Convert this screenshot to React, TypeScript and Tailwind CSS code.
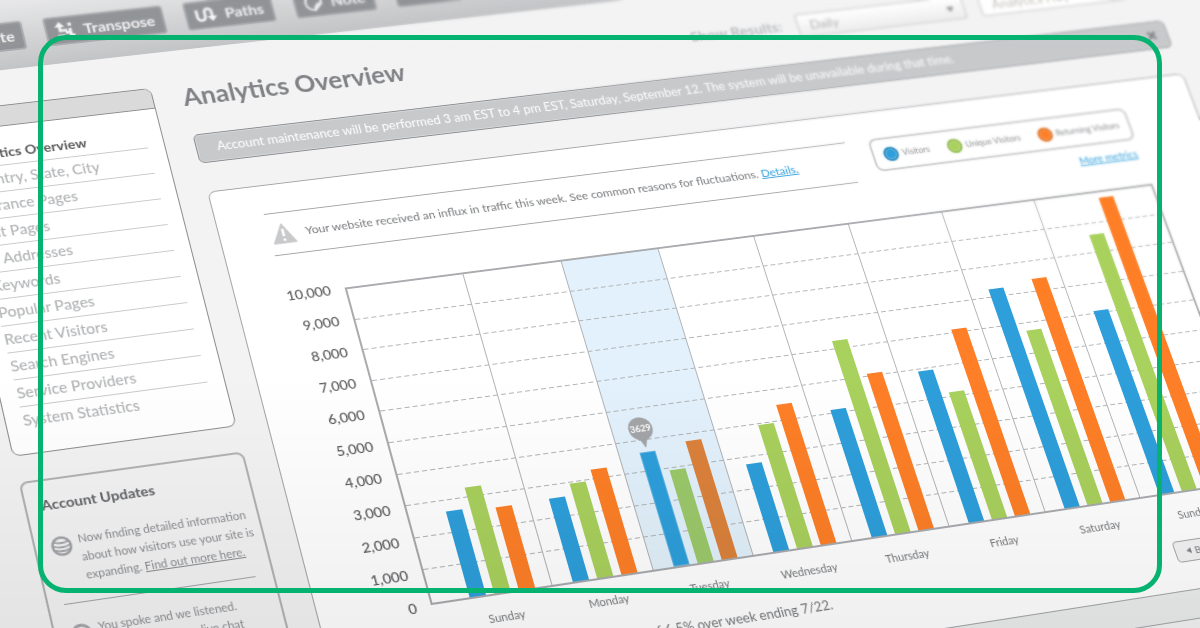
import React from 'react';

type Day = {
  label: string;
  values: [number, number, number];
};

const MAX_VALUE = 10000;

const toolbarItems = ['Create', 'Transpose', 'Paths', 'Note', 'Export'];

const navItems = [
  'Analytics Overview',
  'Country, State, City',
  'Entrance Pages',
  'Exit Pages',
  'IP Addresses',
  'Keywords',
  'Popular Pages',
  'Recent Visitors',
  'Search Engines',
  'Service Providers',
  'System Statistics',
];

const axisLabels = [
  '10,000', '9,000', '8,000', '7,000', '6,000', '5,000',
  '4,000', '3,000', '2,000', '1,000', '0',
];

const days: Day[] = [
  { label: 'Sunday', values: [2673, 3313, 2580] },
  { label: 'Monday', values: [2603, 2973, 3306] },
  { label: 'Tuesday', values: [3629, 2934, 3768] },
  { label: 'Wednesday', values: [2780, 3956, 4497] },
  { label: 'Thursday', values: [4125, 6304, 5092] },
  { label: 'Friday', values: [4954, 4147, 6137] },
  { label: 'Saturday', values: [7264, 5777, 7425] },
  { label: 'Sunday', values: [6092, 8618, 9805] },
];

const SELECTED_DAY = 2;

const barColors = ['bg-[#2e9fdb]', 'bg-[#a9d15d]', 'bg-[#fe7f27]'];
const selectedBarColors = [
  'bg-[#2e9fdb] ring-1 ring-inset ring-[#5fb5e4]',
  'bg-[#9cc96b]',
  'bg-[#dc823c]',
];

const legend = [
  { label: 'Visitors', color: 'bg-[#2e9fdb] border-[#2687bd]' },
  { label: 'Unique Visitors', color: 'bg-[#a9d15d] border-[#8cb84a]' },
  { label: 'Returning Visitors', color: 'bg-[#fe7f27] border-[#dd6c1c]' },
];

const TransposeIcon = () => (
  <svg viewBox="0 0 20 20" className="h-5 w-5" fill="none" stroke="currentColor" strokeWidth="3">
    <path d="M5 4v6h7M15 8v8M10 12.500h6M2 16h7M14 16h5" />
    <path d="M5 0 10 6H0zM13.500 2h3.500v3.500h-3.500z" fill="currentColor" stroke="none" />
  </svg>
);

const PathsIcon = () => (
  <svg viewBox="0 0 22 20" className="h-5 w-[22px]" fill="none" stroke="currentColor" strokeWidth="3">
    <path d="M2 4v8a4 4 0 0 0 8 0V7a3.500 3.500 0 0 1 7 0v7" />
    <path d="M12 12h10l-5 6z" fill="currentColor" stroke="none" />
  </svg>
);

const NoteIcon = () => (
  <svg viewBox="0 0 20 20" className="h-5 w-5" fill="none" stroke="currentColor" strokeWidth="2">
    <path d="M11 18a8 8 0 1 1 7-7l-7 7c0-4 2-7 7-7" />
  </svg>
);

const GlobeIcon = () => (
  <svg viewBox="0 0 20 20" className="mt-1 h-5 w-5 shrink-0 text-[#a3a5a8]" fill="none" stroke="currentColor">
    <circle cx="10" cy="10" r="8.500" strokeWidth="2.500" />
    <path d="M3 5.500q7 3 14 0M2 9.500q8 3.500 16 0M3 13.500q7 3 14 0" strokeWidth="1.800" />
  </svg>
);

const ChatIcon = () => (
  <svg viewBox="0 0 20 20" className="mt-1 h-5 w-5 shrink-0 text-[#a3a5a8]" fill="none" stroke="currentColor">
    <circle cx="10" cy="10" r="8.500" strokeWidth="3" />
  </svg>
);

const WarningIcon = () => (
  <svg viewBox="0 0 24 22" className="h-[22px] w-6 shrink-0">
    <path d="M12 1 23 21H1z" fill="#c8c9cb" stroke="#c8c9cb" strokeWidth="1.500" strokeLinejoin="round" />
    <path d="M12 6v8M12 16.500v2.500" stroke="#fff" strokeWidth="2.500" />
  </svg>
);

const toolbarIcons: Record<string, React.ReactNode> = {
  Transpose: <TransposeIcon />,
  Paths: <PathsIcon />,
  Note: <NoteIcon />,
};

const Toolbar = () => (
  <header className="flex h-[84px] items-end gap-[21px] bg-linear-to-b from-[#ececed] to-[#c3c4c6] pb-5 pl-[88px]">
    {toolbarItems.map((item) => (
      <button
        key={item}
        type="button"
        className="flex h-8 items-center gap-2 rounded-sm border-2 border-[#a9abae] bg-[#929497] px-2 text-base font-bold text-white/90"
      >
        {toolbarIcons[item]}
        {item}
      </button>
    ))}
  </header>
);

const Sidebar = () => (
  <aside className="w-[214px] shrink-0">
    <nav className="overflow-hidden rounded-lg border border-[#8b8d90] bg-white pb-5">
      <div className="h-[22px] border-b border-[#8b8d90] bg-[#dadadb]" />
      <ul className="pt-3.5 pr-4 pl-4">
        {navItems.map((item, i) => (
          <li key={item} className={i < navItems.length - 1 ? 'border-b border-[#c8c9cb]' : ''}>
            <a
              href="#"
              className={`block leading-[27px] whitespace-nowrap ${i === 0 ? 'text-sm font-bold text-[#58595b]' : 'text-[15px] font-medium text-[#b1b3b5]'}`}
            >
              {item}
            </a>
          </li>
        ))}
      </ul>
    </nav>

    <section className="mt-[26px] rounded-lg border-2 border-[#b1b3b5] pt-3 pr-4 pb-6 pl-3.5">
      <h2 className="text-sm leading-6 font-bold text-[#636467]">Account Updates</h2>
      <div className="mt-4 flex gap-1.5 border-b border-[#a3a5a8] pb-4 text-[11px] leading-[18px] text-[#8b8d90]">
        <GlobeIcon />
        <p className="whitespace-nowrap">
          Now finding detailed information
          <br />
          about how visitors use your site is
          <br />
          expanding. <a href="#" className="underline">Find out more here.</a>
        </p>
      </div>
      <div className="mt-4 flex gap-1.5 text-[11px] leading-[18px] text-[#8b8d90]">
        <ChatIcon />
        <p className="whitespace-nowrap">
          You spoke and we listened.
          <br />
          Now our users can live chat
        </p>
      </div>
    </section>
  </aside>
);

const Chart = () => (
  <div className="flex">
    <div className="-mt-4 w-[59px] shrink-0 pr-3.5 text-right text-sm font-medium text-[#58595b]">
      {axisLabels.map((label) => (
        <div key={label} className="h-[33px] leading-[33px]">{label}</div>
      ))}
    </div>
    <div className="min-w-0 flex-1">
      <div className="relative flex h-[330px] border-2 border-[#a9abae]">
        <div className="absolute top-0 bottom-0 left-[216px] w-[100px] bg-[#e2f1fb]" />
        <div className="absolute inset-0 flex flex-col">
          {axisLabels.slice(1).map((label) => (
            <div key={label} className="flex flex-1 items-end last:invisible">
              <div className="h-px w-full bg-[repeating-linear-gradient(90deg,#b1b3b5_0_5px,transparent_5px_8px)]" />
            </div>
          ))}
        </div>
        {days.map((day, i) => (
          <div
            key={i}
            className={`relative flex items-end gap-2 ${i === 0 ? 'w-[117px] pl-9' : i === days.length - 1 ? 'flex-1 pl-5' : 'w-[100px] pl-5'} ${i < days.length - 1 ? 'border-r border-[#b1b3b5]' : ''}`}
          >
            {day.values.map((value, s) => (
              <div
                key={s}
                className={`relative w-4 ${i === SELECTED_DAY ? selectedBarColors[s] : barColors[s]}`}
                style={{ height: `${(value / MAX_VALUE) * 100}%` }}
              >
                {i === SELECTED_DAY && s === 0 && (
                  <span className="absolute -top-9 -left-1 flex h-6 w-6 items-center justify-center rounded-full bg-[#a3a5a8] text-[9px] font-bold text-white">
                    {value}
                    <span className="absolute -bottom-2 border-x-4 border-t-10 border-x-transparent border-t-[#a3a5a8]" />
                  </span>
                )}
              </div>
            ))}
          </div>
        ))}
      </div>
      <div className="mt-3 flex pl-[18px] text-[11px] leading-5 text-[#77797c]">
        {days.map((day, i) => (
          <span key={i} className="w-[100px] text-center">{day.label}</span>
        ))}
      </div>
    </div>
  </div>
);

const TrafficPanel = () => (
  <section className="mt-[31px] overflow-hidden rounded-lg border border-[#a3a5a8] bg-white">
    <div className="pt-[30px] pr-[76px] pl-12">
      <div className="mb-7 flex items-start gap-6">
        <div className="flex h-[46px] flex-1 items-center gap-2.5 border-y border-[#a3a5a8] pl-0.5 text-xs whitespace-nowrap text-[#77797c]">
          <WarningIcon />
          <p>
            Your website received an influx in traffic this week. See common reasons for fluctuations.{' '}
            <a href="#" className="text-[#2e9fdb] underline">Details.</a>
          </p>
        </div>
        <div className="w-[282px] text-right">
          <ul className="flex h-[37px] items-center justify-between rounded-lg border-2 border-[#c8c9cb] px-2.5">
            {legend.map(({ label, color }) => (
              <li key={label} className="flex items-center gap-1 text-[9px] whitespace-nowrap text-[#8b8d90]">
                <span className={`h-4 w-4 rounded-full border-2 ring-1 ring-inset ring-white/40 ${color}`} />
                {label}
              </li>
            ))}
          </ul>
          <a href="#" className="mt-2 mr-1 block text-[11px] leading-[15px] text-[#2e9fdb] underline">More metrics</a>
        </div>
      </div>
      <Chart />
      <div className="mt-4 flex h-[22px] items-center text-[13px] text-[#77797c]">
        <p className="w-[439px] text-right whitespace-nowrap">
          Visitors increased by an average of 6.5% over week ending 7/22.
        </p>
        <div className="ml-auto flex w-[115px] gap-2 text-[10px]">
          <button type="button" className="flex h-[22px] flex-1 items-center justify-center gap-1 rounded border border-[#a3a5a8] bg-[#f4f4f5]">
            <span className="border-y-3 border-r-5 border-y-transparent border-r-[#808285]" />
            Back
          </button>
          <button type="button" className="flex h-[22px] flex-1 items-center justify-center gap-1 rounded border border-[#a3a5a8] bg-[#f4f4f5]">
            Next
            <span className="border-y-3 border-l-5 border-y-transparent border-l-[#808285]" />
          </button>
        </div>
      </div>
    </div>
    <div className="mt-7 h-[30px] border-y border-[#a3a5a8] bg-[#ebecec]" />
    <div className="h-24 bg-[#f4f4f5]" />
  </section>
);

const App: React.FC = () => {
  return (
    <div className="relative h-screen overflow-hidden bg-[#f3f3f4] font-['Lato','Liberation_Sans',sans-serif]">
      {/* tilted dashboard board */}
      <div className="w-[117vw] min-w-[1400px] origin-top-left bg-[#f3f3f4] [transform:matrix3d(1.0168,-0.10995,0,0.00006305,0.21285,0.88936,0,-0.00010848,0,0,1,0,-143.37,9.5,0,1.00627)]">
        <Toolbar />
        <div className="flex gap-[29px] pt-[38px] pr-[76px] pb-40 pl-[51px]">
          <Sidebar />
          <main className="min-w-0 flex-1">
            <div className="flex h-14 items-start">
              <h1 className="flex-1 text-[26px] leading-7 font-bold text-[#808285]">Analytics Overview</h1>
              <label htmlFor="range" className="pr-4 text-base font-bold text-[#b9bbbd]">Show Results:</label>
              <div className="relative mr-4 h-7 w-[184px]">
                <select
                  id="range"
                  className="h-full w-full appearance-none rounded border-2 border-[#dadadb] bg-linear-to-b from-white to-[#ececed] px-3 text-sm text-[#b1b3b5]"
                >
                  <option>Daily</option>
                  <option>Weekly</option>
                </select>
                <span className="absolute top-3 right-3 border-x-4 border-t-6 border-x-transparent border-t-[#8b8d90]" />
              </div>
              <input
                type="text"
                aria-label="Search help"
                placeholder="Analytics Help"
                className="h-7 w-48 rounded border-2 border-[#dadadb] bg-white px-3 text-sm placeholder:text-[#c0bcb6]"
              />
            </div>
            <div className="flex h-8 items-center justify-between rounded-md border border-[#8b8d90] bg-[#c8c9cb] pr-3 pl-5 text-[13px] text-white ring-1 ring-inset ring-[#d6d7d8]">
              <p>
                Account maintenance will be performed 3 am EST to 4 pm EST, Saturday, September 12. The system will be unavailable during that time.
              </p>
              <button type="button" aria-label="Dismiss" className="text-[#808285]">
                <svg viewBox="0 0 10 10" className="h-2.5 w-2.5" stroke="currentColor" strokeWidth="2.500">
                  <path d="M1 1l8 8M9 1 1 9" />
                </svg>
              </button>
            </div>
            <TrafficPanel />
          </main>
        </div>
      </div>

      {/* shading towards the bottom and soft focus towards the far corner */}
      <div className="pointer-events-none absolute inset-0 bg-linear-to-b from-transparent from-60% to-black/6" />
      <div className="pointer-events-none absolute inset-0 backdrop-blur-[1px] [mask-image:linear-gradient(20deg,transparent_66%,black_84%)]" />
      <div className="pointer-events-none absolute inset-x-0 top-0 h-12 backdrop-blur-[1px] [mask-image:linear-gradient(to_top,transparent,black)]" />

      <div className="pointer-events-none absolute inset-x-[38px] inset-y-[35px] rounded-[28px] border-5 border-[#06b26f]" />
    </div>
  );
};

export default App;
